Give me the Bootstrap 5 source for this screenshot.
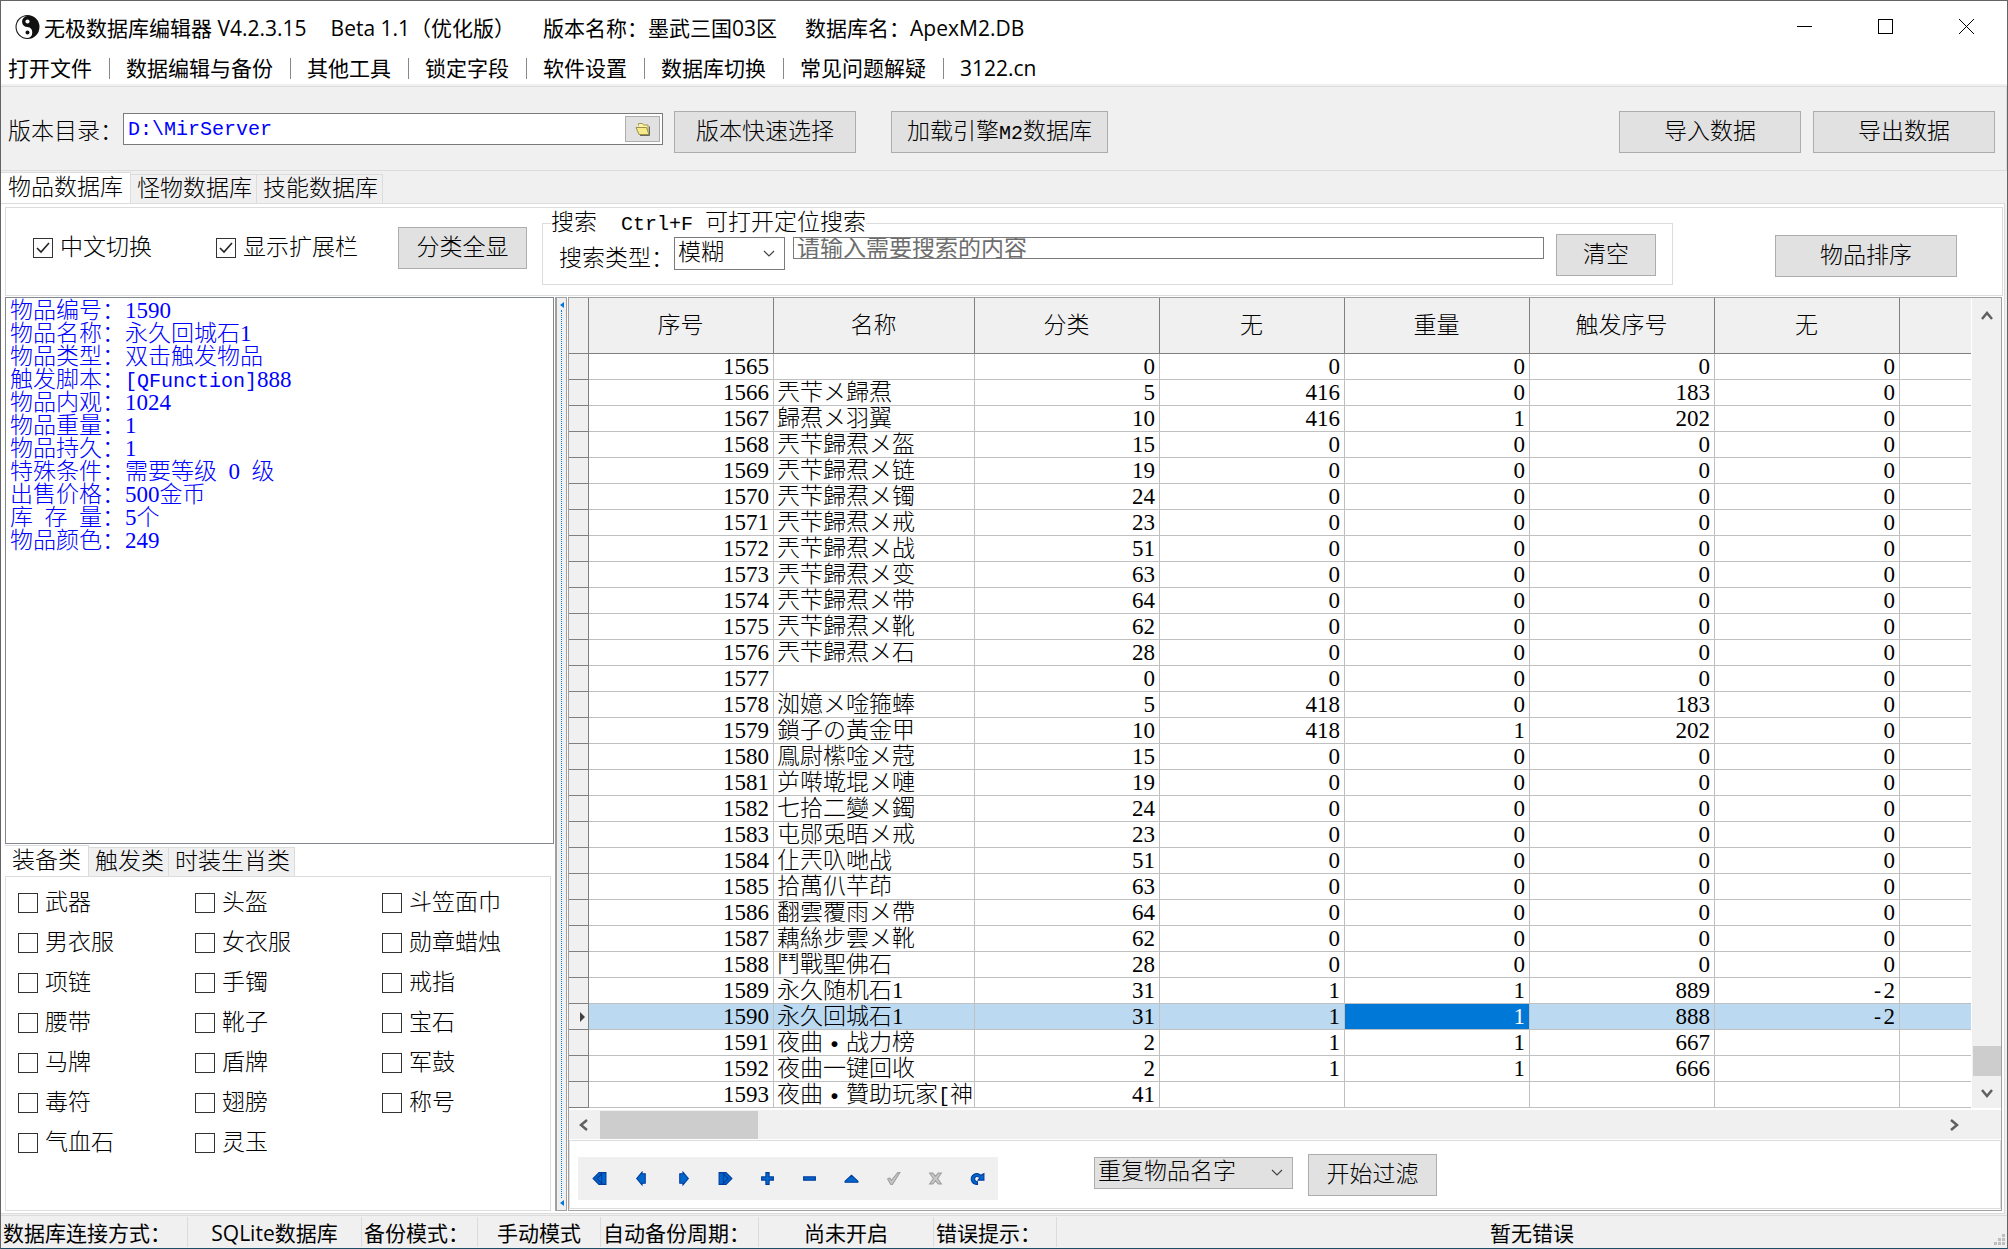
<!DOCTYPE html>
<html lang="zh-CN">
<head>
<meta charset="utf-8">
<meta name="viewport" content="width=device-width, initial-scale=1">
<title>无极数据库编辑器 V4.2.3.15</title>
<link href="https://cdn.jsdelivr.net/npm/bootstrap@5.3.0/dist/css/bootstrap.min.css" rel="stylesheet">
<style>
:root{--song:"Liberation Serif","Noto Sans CJK SC",serif;--ui:"Noto Sans CJK SC",sans-serif;--face:#f0f0f0;--line:#dcdcdc;--grid:#c0c0c0;--edge:#a0a0a0}
body{background:var(--face);color:#000;font-family:var(--song);font-size:23px;font-weight:300;line-height:26px;min-height:100vh;border:1px solid #646464;border-bottom-color:#1e4e66;overflow-x:hidden}
.en{font-family:"Open Sans",sans-serif;font-size:21px;font-weight:400;line-height:1}
.mono{font-family:"Liberation Mono",monospace;font-size:20px;white-space:pre;line-height:1}
.ui-text{font-family:var(--ui);font-size:21px;font-weight:400;line-height:30px}
.title-bar{height:51px;background:#fff;padding-left:14px;white-space:pre}
.title-bar h1{font-size:21px;font-weight:400;line-height:38px;margin:0}
.win-btn{width:81px;height:50px;border:0;background:none;padding:0;display:flex;align-items:center;justify-content:center}
.menu-bar{height:32px;background:#fff;padding-left:7px}
.menu-bar a{color:#000;text-decoration:none;white-space:nowrap}
.menu-bar a+a::before{content:"";display:inline-block;width:1px;height:21px;background:#888;margin:0 16px 0 17px;vertical-align:-3px}
.dir-bar{margin-top:2px;height:85px;border:solid var(--line);border-width:1px 1px 1px 0;padding:7px 11px 0 7px}
.btn-win{background:#e1e1e1;border:1px solid #adadad;border-radius:0;color:#000;font-size:23px;font-weight:300;line-height:26px;padding:0;height:42px;white-space:nowrap;flex:none}
.btn-win:hover{background:#e5f1fb;border-color:#0078d7}
.w-wide{width:182px}
.w-mid{width:129px}
.w-load{width:217px;margin-left:35px}
.w-short{width:100px}
.dir-box{width:540px;height:32px;background:#fff;border:1px solid #7a7a7a;padding:2px;margin:0 11px 6px 0}
.dir-box input{border:0;background:none;color:#00f;min-width:0;outline:0;padding:0 2px}
.dir-box button{width:35px;height:26px;border:1px solid #adadad;background:#e1e1e1;padding:0}
.tab-strip{padding-top:1px;margin-bottom:-1px}
.tab-strip .tab-item{background:var(--face);border:1px solid var(--line);border-left-width:0;color:#000;padding:0 4px 0 6px;height:30px;font-size:23px;font-weight:300;line-height:28px;align-self:flex-end;white-space:nowrap;font-family:var(--song)}
.tab-strip .tab-item.active{background:#fff;height:32px;border-bottom-color:#fff;line-height:28px;padding:0 7px}
.tab-page{background:#fff;border:1px solid var(--line);border-left:0}
.main-page{margin-right:2px;padding:3px 1px 2px 4px}
.tool-frame{height:89px;border:1px solid var(--line);margin-bottom:1px;padding-left:27px;padding-right:45px}
.show-all{margin:0 15px 0 40px}
.tick{appearance:none;width:20px;height:20px;border:1px solid #333;background:#fff;margin:0;flex:none}
.tick:checked{background:#fff url("data:image/svg+xml,%3Csvg xmlns='http://www.w3.org/2000/svg' viewBox='0 0 18 18'%3E%3Cpath d='M3 9l4 4 8-9' fill='none' stroke='%23222' stroke-width='1.6'/%3E%3C/svg%3E") center/18px no-repeat}
.tick-label{display:flex;align-items:center;gap:7px;white-space:nowrap;line-height:26px}
.search-set{border:1px solid var(--line);height:62px;margin:15px 0 0;padding:10px 16px 0 16px;position:relative;flex:1 1 0;max-width:1131px}
.search-set legend{position:absolute;left:8px;top:-15px;width:auto;background:#fff;font-size:23px;line-height:28px;padding:0;margin:0;float:none;z-index:1}
.search-set label{padding-top:12px}
.search-set .pick,.search-set .search-input{margin-top:3px}
.kind-pick{width:111px;height:33px}
.pick{appearance:none;border:1px solid #7a7a7a;border-radius:0;color:#000;font-size:23px;font-weight:300;padding:0 26px 2px 3px;font-family:var(--song);background:#fff url("data:image/svg+xml,%3Csvg xmlns='http://www.w3.org/2000/svg' viewBox='0 0 12 8'%3E%3Cpath d='M1 1l5 5 5-5' fill='none' stroke='%23444' stroke-width='1.2'/%3E%3C/svg%3E") right 9px center/12px 8px no-repeat}
.search-input{height:22px;border:1px solid #7a7a7a;border-radius:0;padding:2px 3px 0;line-height:26px;outline:0;min-width:0}
.search-input::placeholder{color:#6d6d6d}
.left-pane{width:550px;flex:none}
.memo{border:1px solid #828790;background:#fff;color:#00f;padding:1px 4px;line-height:23px;height:547px;overflow:hidden;margin-right:1px}
.memo div{height:23px}
.splitter{width:12px;flex:none;border:solid #a0a0a0;border-width:1px 1px 1px 2px;background:var(--face);display:flex;flex-direction:column;align-items:center;padding:4px 0}
.splitter i{flex:1;border-left:1px dotted #0078d7;margin:2px 0}
.cat-grid{padding:6px 12px;display:grid;grid-template-columns:177px 187px auto;grid-auto-rows:40px;justify-content:start;align-content:start;align-items:center;flex:1}
.grid-pane{margin:0 1px;border:1px solid var(--edge);min-width:0;background:#fff}
.data-grid{width:100%;table-layout:fixed;border-collapse:separate;border-spacing:0}
.data-grid th,.data-grid td{border:solid var(--grid);border-width:0 1px 1px 0;padding:0 4px 0 3px;height:26px;line-height:25px;overflow:hidden;white-space:nowrap;text-align:right;font-weight:300}
.data-grid td:nth-child(3){text-align:left;padding-right:0}
.data-grid thead th{height:56px;background:var(--face);border-color:#808080;text-align:center;padding-bottom:1px}
.data-grid tbody th{background:var(--face);border-color:#808080;padding:0 3px}
.data-grid tr>:last-child{border-right:0}
.data-grid svg{display:block;margin-left:auto}
.data-grid .row-on td{background:#bbdaf2}
.data-grid .row-on td.cell-on{background:#0078d7;color:#fff}
.dot-mid{font-family:"Noto Sans CJK SC",sans-serif;display:inline-block;width:23px;text-align:center;font-weight:700;line-height:1;vertical-align:bottom}
.v-scroll{width:29px;flex:none;margin-left:1px;background:var(--face);padding:13px 0 10px;display:flex;flex-direction:column;align-items:center}
.v-scroll b{background:#cdcdcd;width:28px;height:30px;margin:auto 0 12px}
.h-scroll{height:29px;margin-top:2px;background:var(--face);padding:0 42px 0 10px;display:flex;align-items:center}
.h-scroll b{background:#cdcdcd;width:158px;height:28px;margin:0 auto 0 12px}
.bottom-frame{margin:1px 0 1px;border:1px solid var(--line);padding:0 8px;flex:1}
.nav-box{background:var(--face);height:43px}
.nav-box button{width:42px;height:43px;border:0;background:none;padding:0;display:flex;align-items:center;justify-content:center}
.filter-pick{width:199px;height:32px;background-color:#e1e1e1;border-color:#adadad;margin:0 15px 0 96px}
.status-bar{margin-top:1px;border-top:1px solid var(--line);height:33px;position:relative}
.status-bar span.cellx{border-right:1px solid var(--line);height:30px;flex:none;padding-left:2px;white-space:nowrap}
.status-bar span.mid{text-align:center;padding:0}
.grip{position:absolute;right:2px;bottom:2px}
</style>
</head>
<body class="d-flex flex-column">
<header class="title-bar ui-text d-flex align-items-center"><svg width="25" height="26" viewBox="0 0 24 24" class="me-1 flex-shrink-0" aria-hidden="true"><circle cx="12" cy="12" r="11.5" fill="#111"/><path d="M12 1.5a10.5 10.5 0 0 0 0 21 5.3 5.3 0 0 0 0-10.5A5.2 5.2 0 0 1 12 1.5z" fill="#fff"/><circle cx="12" cy="6.7" r="2" fill="#fff"/><circle cx="12" cy="17.3" r="1.9" fill="#111"/></svg><h1 class="d-flex ms-0"><span>无极数据库编辑器<span class="en"> V4.2.3.15</span></span><span class="ms-4"><span class="en">Beta 1.1</span>（优化版）</span><span class="ms-4 ps-1">版本名称：墨武三国<span class="en">03</span>区</span><span class="ms-4 ps-1">数据库名：<span class="en">ApexM2.DB</span></span></h1><div class="d-flex ms-auto"><button class="win-btn" aria-label="最小化"><svg width="15" height="15"><path d="M0 7.5h15" stroke="#000"/></svg></button><button class="win-btn" aria-label="最大化"><svg width="15" height="15"><rect x=".5" y=".5" width="14" height="14" fill="none" stroke="#000"/></svg></button><button class="win-btn" aria-label="关闭"><svg width="15" height="15"><path d="M0 0l15 15M15 0L0 15" stroke="#000"/></svg></button></div></header>
<nav class="menu-bar ui-text d-flex"><a href="#">打开文件</a><a href="#">数据编辑与备份</a><a href="#">其他工具</a><a href="#">锁定字段</a><a href="#">软件设置</a><a href="#">数据库切换</a><a href="#">常见问题解疑</a><a href="#"><span class="en">3122.cn</span></a></nav>

<section class="dir-bar d-flex align-items-center">
  <label for="dir" class="text-nowrap">版本目录：</label>
  <div class="dir-box d-flex"><input id="dir" class="mono flex-fill" value="D:\MirServer"><button aria-label="浏览" class="d-flex align-items-center justify-content-center"><svg width="16" height="14" viewBox="0 0 16 14"><path d="M3.500 3.500V1.500h4l1 1.500h4.500v9" fill="#fff3a8" stroke="#a39a4a"/><path d="M1 5.500h10.500l2.500 7H4z" fill="#f6e98a" stroke="#9a9142"/><path d="M5 13.500h9.500v-9" fill="none" stroke="#666"/></svg></button></div>
  <button class="btn btn-win w-wide">版本快速选择</button>
  <button class="btn btn-win w-load">加载引擎<span class="mono">M2</span>数据库</button>
  <button class="btn btn-win w-wide ms-auto me-2">导入数据</button>
  <button class="btn btn-win w-wide ms-1">导出数据</button>
</section>

<div class="tab-strip d-flex" role="tablist"><button class="tab-item active" role="tab">物品数据库</button><button class="tab-item" role="tab">怪物数据库</button><button class="tab-item" role="tab">技能数据库</button></div>
<main class="tab-page main-page flex-fill d-flex flex-column">
  <section class="tool-frame d-flex">
    <div class="d-flex align-items-center pb-2">
      <label class="tick-label"><input type="checkbox" class="tick" checked>中文切换</label>
      <label class="tick-label ms-5 ps-3"><input type="checkbox" class="tick" checked>显示扩展栏</label>
      <button class="btn btn-win w-mid show-all">分类全显</button>
    </div>
    <fieldset class="search-set d-flex align-items-start">
      <legend>搜索<span class="mono">  Ctrl+F </span>可打开定位搜索</legend>
      <label for="kind" class="text-nowrap">搜索类型：</label>
      <select id="kind" class="pick kind-pick"><option>模糊</option></select>
      <input class="search-input flex-fill mx-2" placeholder="请输入需要搜索的内容" aria-label="搜索内容">
      <button class="btn btn-win w-short ms-1">清空</button>
    </fieldset>
    <button class="btn btn-win w-wide ms-auto align-self-center mt-2">物品排序</button>
  </section>

  <div class="d-flex flex-fill">
    <aside class="left-pane d-flex flex-column">
      <div class="memo">
        <div>物品编号：1590</div><div>物品名称：永久回城石1</div><div>物品类型：双击触发物品</div><div>触发脚本：<span class="mono">[QFunction]</span>888</div><div>物品内观：1024</div><div>物品重量：1</div><div>物品持久：1</div><div>特殊条件：需要等级&ensp;0&ensp;级</div><div>出售价格：500金币</div><div>库&ensp;存&ensp;量：5个</div><div>物品颜色：249</div>
      </div>
      <div class="tab-strip d-flex" role="tablist"><button class="tab-item active" role="tab">装备类</button><button class="tab-item" role="tab">触发类</button><button class="tab-item" role="tab">时装生肖类</button></div>
      <div class="tab-page cat-grid border-start me-1" id="cats"></div>
    </aside>
    <div class="splitter"><svg width="4" height="6"><path d="M4 0v6L0 3z" fill="#0078d7"/></svg><i></i><svg width="4" height="6"><path d="M4 0v6L0 3z" fill="#0078d7"/></svg></div>
    <section class="grid-pane flex-fill d-flex flex-column">
      <div class="d-flex">
        <div class="flex-fill overflow-hidden">
          <table class="data-grid">
            <colgroup><col style="width:20px"><col style="width:185px"><col style="width:201px"><col style="width:185px"><col style="width:185px"><col style="width:185px"><col style="width:185px"><col style="width:185px"><col></colgroup>
            <thead><tr><th></th><th>序号</th><th>名称</th><th>分类</th><th>无</th><th>重量</th><th>触发序号</th><th>无</th><th></th></tr></thead>
            <tbody id="rows"></tbody>
          </table>
        </div>
        <div class="v-scroll"><svg width="12" height="10"><path d="M1 8l5-6 5 6" fill="none" stroke="#606060" stroke-width="2.500"/></svg><b></b><svg width="12" height="10"><path d="M1 2l5 6 5-6" fill="none" stroke="#606060" stroke-width="2.500"/></svg></div>
      </div>
      <div class="h-scroll"><svg width="9" height="12"><path d="M8 1L2 6l6 5" fill="none" stroke="#606060" stroke-width="2.500"/></svg><b></b><svg width="9" height="12"><path d="M1 1l6 5-6 5" fill="none" stroke="#606060" stroke-width="2.500"/></svg></div>
      <div class="bottom-frame d-flex align-items-center">
        <div class="nav-box d-flex mt-2" id="nav"></div>
        <select class="pick filter-pick mb-1" id="dup" aria-label="过滤条件"><option>重复物品名字</option></select>
        <button class="btn btn-win w-mid">开始过滤</button>
      </div>
    </section>
  </div>
</main>
<footer class="status-bar ui-text d-flex align-items-center"><span class="cellx" style="width:187px">数据库连接方式：</span><span class="cellx mid" style="width:174px"><span class="en">SQLite</span>数据库</span><span class="cellx" style="width:116px">备份模式：</span><span class="cellx mid" style="width:123px">手动模式</span><span class="cellx" style="width:158px">自动备份周期：</span><span class="cellx mid" style="width:175px">尚未开启</span><span class="cellx" style="width:123px">错误提示：</span><span class="flex-fill text-center">暂无错误</span>
<svg class="grip" width="12" height="12" fill="#bfbfbf" aria-hidden="true"><path d="M9 0h3v3H9zM9 4h3v3H9zM9 8h3v3H9zM5 4h3v3H5zM5 8h3v3H5zM1 8h3v3H1z"/></svg></footer>
<script src="https://cdn.jsdelivr.net/npm/bootstrap@5.3.0/dist/js/bootstrap.bundle.min.js"></script>
<script>
const rows = `1565||0|0|0|0|0
1566|兲芐メ歸焄|5|416|0|183|0
1567|歸焄メ羽翼|10|416|1|202|0
1568|兲芐歸焄メ盔|15|0|0|0|0
1569|兲芐歸焄メ链|19|0|0|0|0
1570|兲芐歸焄メ镯|24|0|0|0|0
1571|兲芐歸焄メ戒|23|0|0|0|0
1572|兲芐歸焄メ战|51|0|0|0|0
1573|兲芐歸焄メ变|63|0|0|0|0
1574|兲芐歸焄メ带|64|0|0|0|0
1575|兲芐歸焄メ靴|62|0|0|0|0
1576|兲芐歸焄メ石|28|0|0|0|0
1577||0|0|0|0|0
1578|洳嬑メ唫箍蜯|5|418|0|183|0
1579|鎖子の黃金甲|10|418|1|202|0
1580|鳯尉橴唫メ蒄|15|0|0|0|0
1581|屰啭墘堒メ嗹|19|0|0|0|0
1582|七拾二變メ鐲|24|0|0|0|0
1583|屯郧兎晤メ戒|23|0|0|0|0
1584|仩兲叺哋战|51|0|0|0|0
1585|拾萬仈芉茚|63|0|0|0|0
1586|翻雲覆雨メ帶|64|0|0|0|0
1587|藕絲步雲メ靴|62|0|0|0|0
1588|鬥戰聖佛石|28|0|0|0|0
1589|永久随机石1|31|1|1|889|-2
1590|永久回城石1|31|1|1|888|-2
1591|夜曲·战力榜|2|1|1|667|
1592|夜曲一键回收|2|1|1|666|
1593|夜曲·贊助玩家[神|41||||`.split("\n");
document.getElementById("rows").innerHTML = rows.map(r => {
  const c = r.split("|"), on = c[0] === "1590";
  c[1] = c[1].replace("·", '<span class="dot-mid">·</span>').replace("[", '<span class="mono">[</span>');
  const mark = on ? '<svg width="5" height="10"><path d="M0 0v10l5-5z" fill="#404040"/></svg>' : "";
  return `<tr${on ? ' class="row-on"' : ""}><th>${mark}</th>` + c.map((v, i) => `<td${on && i === 4 ? ' class="cell-on"' : ""}>${v.replace(/^-2$/, '<span class="mono">-</span>2')}</td>`).join("") + "<td></td></tr>";
}).join("");
document.getElementById("cats").innerHTML = "武器 头盔 斗笠面巾 男衣服 女衣服 勋章蜡烛 项链 手镯 戒指 腰带 靴子 宝石 马牌 盾牌 军鼓 毒符 翅膀 称号 气血石 灵玉".split(" ")
  .map(n => `<label class="tick-label"><input type="checkbox" class="tick">${n}</label>`).join("");
const icons = [
  ["首条", "M6.500 1.500L1 7l5.500 5.500H9v-11zM10 1.500L4.500 7l5.500 5.500h3v-11z"],
  ["上一条", "M7.500 1L2.500 7l5 6v-1.500h3v-9h-3z"],
  ["下一条", "M6.500 1L11.500 7l-5 6v-1.500h-3v-9h3z"],
  ["末条", "M7.500 1.500L13 7l-5.500 5.500H5v-11zM4 1.500L9.500 7 4 12.500H1v-11z"],
  ["新增", "M5.500 1.500h3v4h4v3h-4v4h-3v-4h-4v-3h4z"],
  ["删除", "M1.500 5.500h11v3h-11z"],
  ["编辑", "M1 10.500v-1l6-5.500 6 5.500v1z"],
  ["提交", "M1.500 7.500l2-1 1.500 2.500 6-7.500h2L6 12.500H4.500z"],
  ["取消", "M1.500 2h3L7 5l2.500-3h3L9 7l3.500 5h-3L7 9l-2.500 3h-3L5 7z"],
  ["刷新", "M6 12.500C1 12 0 6.500 2.500 4 5 1.500 8 2 10 4l3-1.500v6H7.500l1.500-2C7.500 4.500 5 5 4.500 6.500 4 8.500 5 10 7 10v2.500z"]
];
document.getElementById("nav").innerHTML = icons.map(([n, d], i) =>
  `<button aria-label="${n}"><svg width="15" height="15" viewBox="0 0 14 14"><path d="${d}" fill="${i == 7 || i == 8 ? "#c8c8c8" : "#0066cc"}" stroke="${i == 7 || i == 8 ? "#a0a0a0" : "#003c9c"}"/></svg></button>`).join("");
</script>
</body>
</html>
